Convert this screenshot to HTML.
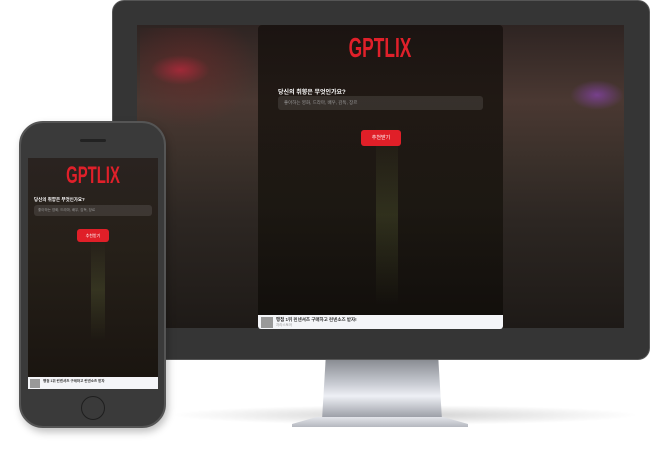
<!DOCTYPE html><html><head><meta charset="utf-8"><style>
*{margin:0;padding:0;box-sizing:border-box}
body{width:660px;height:450px;background:#fff;position:relative;overflow:hidden;font-family:"Liberation Sans","Noto Sans CJK KR",sans-serif}
.abs{position:absolute}
.mon{left:112px;top:0;width:538px;height:360px;background:#353535;border-radius:12px;border:1px solid #555}
.scr{left:137px;top:25px;width:487px;height:303px;background:linear-gradient(180deg,#2e2422 0%,#4a3832 25%,#3a302a 45%,#2c2622 65%,#1e1a17 100%)}
.panel{left:258px;top:25px;width:245px;height:303px;background:linear-gradient(180deg,rgba(22,16,13,.8),rgba(24,20,14,.82) 60%,rgba(16,13,10,.9));border-radius:4px}
.logo{color:#e0202a;font-weight:bold;font-family:"Liberation Sans Narrow","Liberation Sans",sans-serif;transform:scaleX(.62);transform-origin:center;letter-spacing:0;text-align:center}
.q{color:#fff;font-weight:bold}
.inp{background:rgba(255,255,255,.1);border-radius:3px;color:#999}
.btn{background:#e01f28;color:#fff;border-radius:3px;text-align:center}
.ad{background:#f4f5f8}
.beam{background:linear-gradient(180deg,rgba(150,170,90,0),rgba(140,160,80,.18),rgba(150,170,90,0))}
</style></head><body>
<div class="abs" style="left:170px;top:405px;width:470px;height:20px;border-radius:50%;background:radial-gradient(ellipse,rgba(0,0,0,.18),rgba(0,0,0,0) 70%)"></div>
<div class="abs" style="left:322px;top:360px;width:120px;height:60px;background:linear-gradient(180deg,#8a8d93,#c9ccd3 40%,#eef0f5 60%,#9da0a8 95%);clip-path:polygon(3% 0,97% 0,100% 100%,0 100%)"></div>
<div class="abs" style="left:292px;top:417px;width:176px;height:10px;background:linear-gradient(180deg,#e3e5ea,#b5b8bf);clip-path:polygon(14% 0,86% 0,100% 70%,100% 100%,0 100%,0 70%)"></div>
<div class="abs mon"></div>
<div class="abs scr"></div>
<div class="abs" style="left:140px;top:28px;width:118px;height:100px;background:radial-gradient(ellipse at 40% 40%,rgba(120,40,40,.5),rgba(0,0,0,0) 70%)"></div>
<div class="abs" style="left:150px;top:55px;width:60px;height:30px;background:radial-gradient(ellipse,rgba(230,40,70,.5),rgba(0,0,0,0) 70%)"></div>
<div class="abs" style="left:570px;top:80px;width:54px;height:30px;background:radial-gradient(ellipse,rgba(150,70,200,.6),rgba(0,0,0,0) 70%)"></div>
<div class="abs panel"></div>
<div class="abs beam" style="left:376px;top:125px;width:22px;height:180px"></div>
<div class="abs logo" style="left:320px;top:32px;width:120px;font-size:28px">GPTLIX</div>
<div class="abs q" style="left:278px;top:87px;font-size:6px">당신의 취향은 무엇인가요?</div>
<div class="abs inp" style="left:278px;top:96px;width:205px;height:14px;font-size:4.5px;padding:4px 6px">좋아하는 영화, 드라마, 배우, 감독, 장르</div>
<div class="abs btn" style="left:361px;top:130px;width:40px;height:16px;font-size:5px;line-height:16px">추천받기</div>
<div class="abs ad" style="left:258px;top:315px;width:245px;height:14px;border-radius:0 0 3px 3px"></div>
<div class="abs" style="left:261px;top:317px;width:12px;height:11px;background:#999"></div>
<div class="abs" style="left:276px;top:317px;font-size:4.5px;color:#333;font-weight:bold">맹점 1위 린넨셔츠 구매하고 린넨소즈 받자!</div>
<div class="abs" style="left:276px;top:323px;font-size:3.5px;color:#999">자라스토어</div>

<div class="abs" style="left:19px;top:121px;width:147px;height:307px;background:#3a3a3a;border-radius:24px;border:2px solid #555;box-shadow:2px 4px 8px rgba(0,0,0,.25)"></div>
<div class="abs" style="left:80px;top:139px;width:26px;height:3px;background:#222;border-radius:2px"></div>
<div class="abs" style="left:28px;top:158px;width:130px;height:219px;background:linear-gradient(180deg,#2a2320,#262019 40%,#1a1510 100%)"></div>
<div class="abs beam" style="left:91px;top:240px;width:14px;height:100px"></div>
<div class="abs logo" style="left:43px;top:162px;width:100px;font-size:24px">GPTLIX</div>
<div class="abs q" style="left:34px;top:197px;font-size:4.5px">당신의 취향은 무엇인가요?</div>
<div class="abs inp" style="left:34px;top:205px;width:118px;height:11px;font-size:3.5px;padding:3px 4px">좋아하는 영화, 드라마, 배우, 감독, 장르</div>
<div class="abs btn" style="left:77px;top:229px;width:32px;height:13px;font-size:4px;line-height:13px">추천받기</div>
<div class="abs ad" style="left:28px;top:377px;width:130px;height:12px"></div>
<div class="abs" style="left:30px;top:379px;width:10px;height:9px;background:#999"></div>
<div class="abs" style="left:43px;top:379px;font-size:3.5px;color:#333;font-weight:bold">맹점 1위 린넨셔츠 구매하고 린넨소즈 받자</div>
<div class="abs" style="left:81px;top:396px;width:24px;height:24px;border-radius:50%;border:1.5px solid #1e1e1e"></div>
</body></html>
